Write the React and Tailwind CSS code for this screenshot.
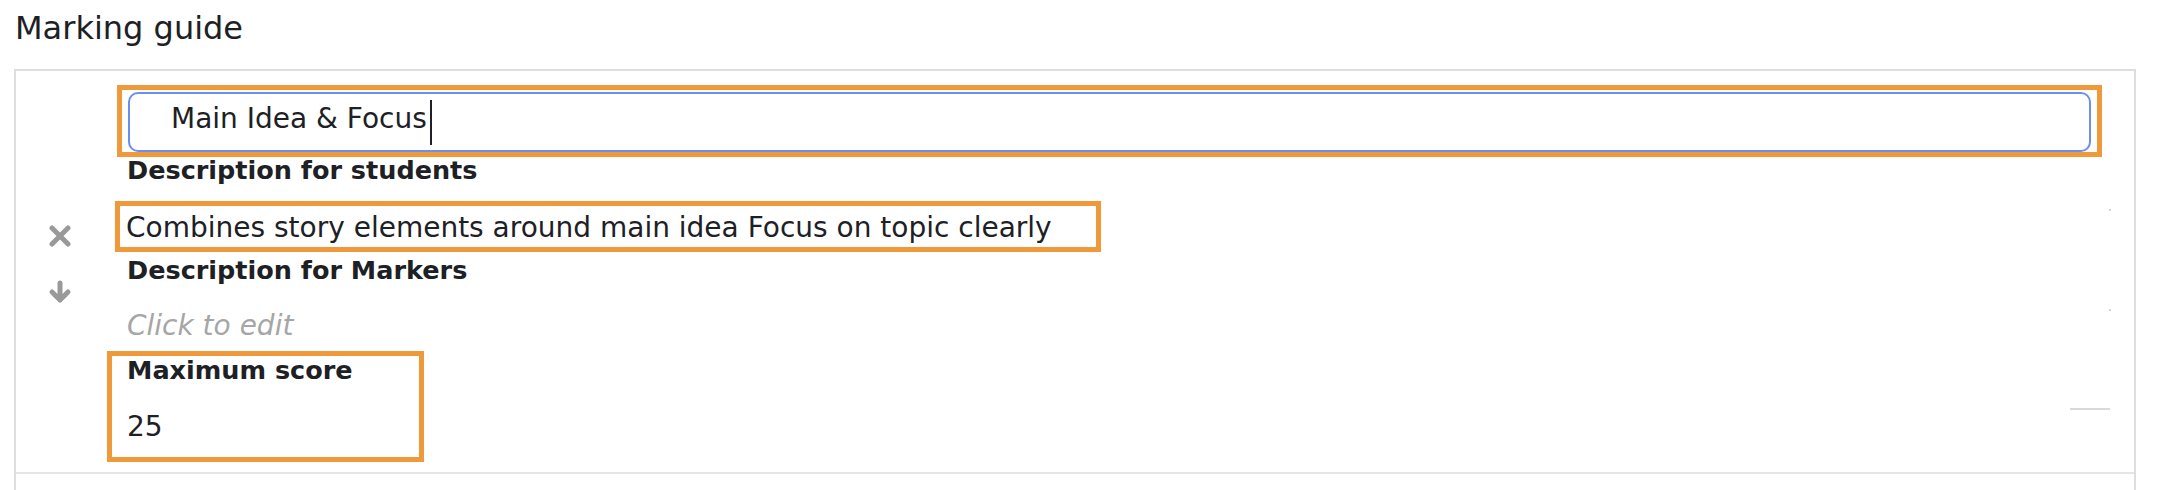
import React from 'react';

const font = { fontFamily: '"DejaVu Sans", Inter, sans-serif' };

const CrossIcon = () => (
    <svg width="24" height="22" viewBox="0 0 24 22" fill="none" stroke="#999999" strokeWidth="5" strokeLinecap="round">
        <path d="M4 3 L20 19 M20 3 L4 19" />
    </svg>
);

const ArrowDownIcon = () => (
    <svg width="24" height="24" viewBox="0 0 24 24" fill="none" stroke="#999999" strokeWidth="5" strokeLinecap="round" strokeLinejoin="round">
        <path d="M12 3 V20 M4 12 L12 20 L20 12" />
    </svg>
);

const App = () => {
    return (
        <div className="w-full h-[490px] overflow-hidden bg-white text-[#1d2125]" style={font}>
            {/* heading */}
            <div className="pl-[15px] pt-[10px] mb-[23px] text-[32px] leading-[36px]">
                Marking guide
            </div>

            {/* criterion box */}
            <div className="ml-[14px] mr-[36px] h-[600px] border-2 border-[#dedede]">
                <div className="flex border-b-2 border-[#e6e6e6] pb-[10px]">
                    {/* actions */}
                    <div className="w-[91px] shrink-0 flex flex-col pl-[32px] pt-[154px] gap-[33px]">
                        <CrossIcon />
                        <ArrowDownIcon />
                    </div>

                    {/* fields */}
                    <div className="flex-1 flex flex-col text-[28px] leading-[27px]">
                        <div className="mt-[14px] ml-[10px] mr-[32px] border-[5px] border-[#f0993b] pt-[2px] px-[6px]">
                            <div className="h-[60px] rounded-[10px] border-2 border-[#6b8ff0] flex items-center pl-[41px]">
                                <span className="pb-[7px] leading-[33px]">Main Idea &amp; Focus</span>
                                <span className="ml-[3px] w-[2px] h-[45px] bg-[#1d2125]"></span>
                            </div>
                        </div>

                        <div className="pl-[20px] font-bold text-[25.5px]">Description for students</div>

                        <div className="mt-[17px] flex justify-between items-start">
                            <div className="ml-[8px] w-[986px] border-[5px] border-[#f0993b] pt-[8px] pb-[6px] pl-[6px] whitespace-nowrap">
                                Combines story elements around main idea Focus on topic clearly
                            </div>
                            <div className="mt-[8px] mr-[23px] w-[2px] h-[2px] bg-[#d4d4d4]"></div>
                        </div>

                        <div className="mt-[5px] pl-[20px] font-bold text-[25.5px]">Description for Markers</div>

                        <div className="mt-[28px] flex justify-between items-start">
                            <div className="pl-[20px] italic text-[#a6a6a6]">Click to edit</div>
                            <div className="-mt-[3px] mr-[23px] w-[2px] h-[2px] bg-[#d4d4d4]"></div>
                        </div>

                        <div className="mt-[12px] flex justify-between items-start">
                            <div className="w-[317px] border-[5px] border-[#f0993b] pt-[1px] pb-[17px] pl-[15px]">
                                <div className="font-bold text-[25.5px]">Maximum score</div>
                                <div className="mt-[29px]">25</div>
                            </div>
                            <div className="mt-[57px] mr-[24px] w-[40px] h-[2px] bg-[#d9d9d9]"></div>
                        </div>
                    </div>
                </div>
            </div>
        </div>
    );
};

export default App;
